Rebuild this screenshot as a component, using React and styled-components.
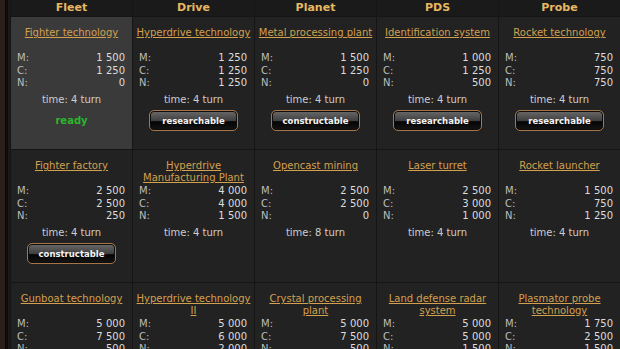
import React from "react";
import styled, { createGlobalStyle } from "styled-components";

const GlobalStyle = createGlobalStyle`
    body {
        margin:0;
        background-color:#1b1b1b;
        font-family:"DejaVu Sans", Verdana, sans-serif;
    }
`

const Page = styled.div`
    display:flex;
    flex-flow:row nowrap;
    width:620px;
    height:349px;
    overflow:hidden;
    background-color:#1b1b1b;
`

const Frame = styled.div`
    flex:0 0 10px;
    background:linear-gradient(to right, #2c1f19 0, #2c1f19 5px, #100b09 5px, #100b09 8px, #1a1a1a 8px);
`

const Table = styled.div`
    display:grid;
    grid-template-columns:repeat(5, 121px);
    grid-template-rows:16px;
    grid-auto-rows:132px;
    gap:1px;
    padding-left:1px;
    background-color:#151515;
    align-content:start;
`

const Heading = styled.div`
    background-color:#1a1a1a;
    color:#e6b862;
    font-size:11px;
    font-weight:bold;
    line-height:16px;
    text-align:center;
`

const Cell = styled.div`
    display:flex;
    flex-flow:column nowrap;
    padding-top:10px;
    background-color:${p => p.$active ? "#3a3a3a" : "#222222"};
    color:#cdcdcd;
    font-size:10px;
`

const Title = styled.a`
    display:block;
    min-height:24px;
    margin-bottom:1px;
    padding:0 3px;
    line-height:12px;
    text-align:center;
    color:#d3a04f;
    text-decoration:underline;
    text-underline-offset:1px;
`

const Stats = styled.div`
    display:grid;
    grid-template-columns:auto 1fr;
    padding:0 7px 0 6px;
    line-height:12.5px;
`

const Label = styled.span`
    color:#bdbdbd;
`

const Value = styled.span`
    text-align:right;
    color:#dcdcdc;
`

const Time = styled.div`
    margin-top:4.5px;
    line-height:12px;
    text-align:center;
`

const Action = styled.div`
    display:flex;
    justify-content:center;
    align-items:center;
    height:21px;
    margin-top:4px;
`

const Ready = styled.span`
    color:#2cb52c;
    font-weight:bold;
    font-size:10px;
`

const Button = styled.button`
    width:89px;
    height:21px;
    padding:0;
    border:1px solid #a6764a;
    border-radius:5px;
    box-shadow:inset 0 0 0 1px #0c0c0c;
    background:linear-gradient(to bottom, #6a6a6a 0%, #3e3e3e 52%, #040404 56%, #151515 100%);
    color:#f4f4f4;
    font-family:"DejaVu Sans", Verdana, sans-serif;
    font-size:8.5px;
    font-weight:bold;
`

const columns = ["Fleet", "Drive", "Planet", "PDS", "Probe"]

const rows = [
    [
        { name: "Fighter technology", m: "1 500", c: "1 250", n: "0", time: 4, ready: true, active: true },
        { name: "Hyperdrive technology", m: "1 250", c: "1 250", n: "1 250", time: 4, action: "researchable" },
        { name: "Metal processing plant", m: "1 500", c: "1 250", n: "0", time: 4, action: "constructable" },
        { name: "Identification system", m: "1 000", c: "1 250", n: "500", time: 4, action: "researchable" },
        { name: "Rocket technology", m: "750", c: "750", n: "750", time: 4, action: "researchable" },
    ],
    [
        { name: "Fighter factory", m: "2 500", c: "2 500", n: "250", time: 4, action: "constructable" },
        { name: "Hyperdrive Manufacturing Plant", m: "4 000", c: "4 000", n: "1 500", time: 4 },
        { name: "Opencast mining", m: "2 500", c: "2 500", n: "0", time: 8 },
        { name: "Laser turret", m: "2 500", c: "3 000", n: "1 000", time: 4 },
        { name: "Rocket launcher", m: "1 500", c: "750", n: "1 250", time: 4 },
    ],
    [
        { name: "Gunboat technology", m: "5 000", c: "7 500", n: "500", time: 4 },
        { name: "Hyperdrive technology II", m: "5 000", c: "6 000", n: "2 000", time: 4 },
        { name: "Crystal processing plant", m: "5 000", c: "7 500", n: "500", time: 4 },
        { name: "Land defense radar system", m: "5 000", c: "5 000", n: "1 500", time: 4 },
        { name: "Plasmator probe technology", m: "1 750", c: "2 500", n: "1 500", time: 4 },
    ],
]

const Item = ({ item }) => (
    <Cell $active={item.active}>
        <Title href="#">{item.name}</Title>
        <Stats>
            <Label>M:</Label><Value>{item.m}</Value>
            <Label>C:</Label><Value>{item.c}</Value>
            <Label>N:</Label><Value>{item.n}</Value>
        </Stats>
        <Time>time: {item.time} turn</Time>
        {item.ready && <Action><Ready>ready</Ready></Action>}
        {item.action && <Action><Button>{item.action}</Button></Action>}
    </Cell>
)

const App = () => {
    return(
    <>
        <GlobalStyle />
        <Page>
            <Frame />
            <Table>
                {columns.map(col => <Heading key={col}>{col}</Heading>)}
                {rows.map((row, i) =>
                    row.map(item => <Item key={i + item.name} item={item} />)
                )}
            </Table>
        </Page>
    </>
    )
}

export default App
